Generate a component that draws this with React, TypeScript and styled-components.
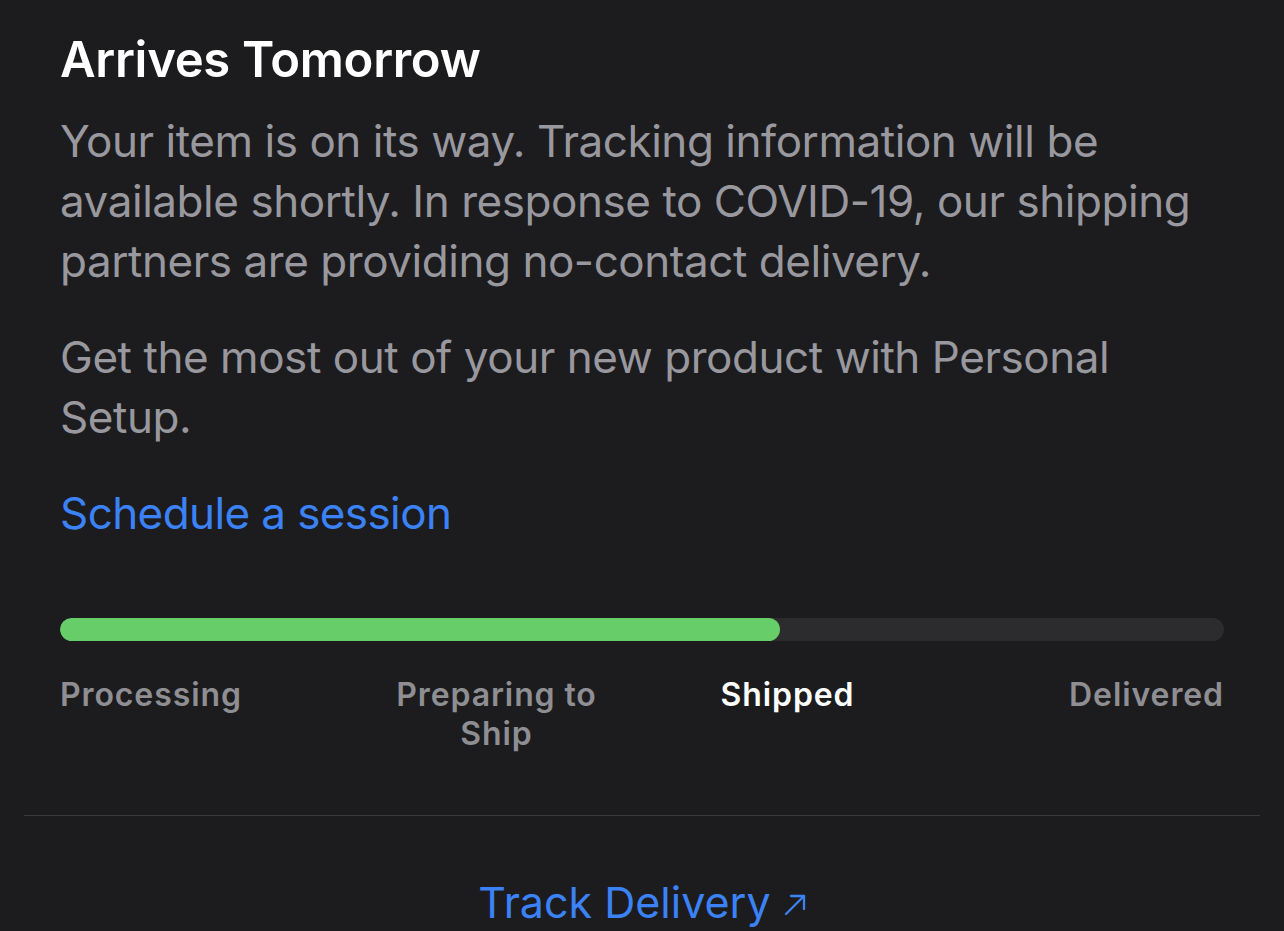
import styled, { createGlobalStyle } from 'styled-components';

const GlobalStyle = createGlobalStyle`
  html, body {
    margin: 0;
    padding: 0;
    background: #1c1c1e;
  }
  body {
    font-family: Inter, "Noto Sans", "Liberation Sans", sans-serif;
    -webkit-font-smoothing: antialiased;
  }
`;

const Page = styled.div`
  width: 1284px;
  height: 931px;
  overflow: hidden;
  background: #1c1c1e;
  padding: 0 24px;
  box-sizing: border-box;
`;

const Body = styled.section`
  padding: 30px 36px 0;
`;

const Title = styled.h1`
  margin: 0 0 21px;
  font-size: 49px;
  line-height: 60px;
  font-weight: 600;
  letter-spacing: -0.3px;
  color: #ffffff;
`;

const Text = styled.p`
  margin: 0 0 36px;
  font-size: 44px;
  line-height: 60px;
  font-weight: 400;
  letter-spacing: -0.45px;
  color: #98989e;
`;

const Link = styled.a`
  display: block;
  font-size: 44px;
  line-height: 60px;
  letter-spacing: -0.6px;
  color: #3b82f6;
  text-decoration: none;
`;

const Track = styled.div`
  margin-top: 75px;
  height: 23px;
  border-radius: 12px;
  background: #2c2c2e;
  overflow: hidden;
`;

const Fill = styled.div`
  height: 100%;
  border-radius: 12px;
  background: #66cd68;
`;

const Steps = styled.div`
  display: grid;
  grid-template-columns: repeat(4, 1fr);
  margin-top: 34px;
  padding-bottom: 62px;
`;

const Step = styled.div<{ $align: 'left' | 'center' | 'right'; $active?: boolean }>`
  text-align: ${(p) => p.$align};
  font-size: 32px;
  line-height: 39px;
  font-weight: 600;
  letter-spacing: 0.9px;
  color: ${(p) => (p.$active ? '#ffffff' : '#8e8e93')};
`;

const Divider = styled.hr`
  margin: 0;
  border: none;
  border-top: 1px solid #3a3a3c;
`;

const Footer = styled.div`
  display: flex;
  justify-content: center;
  padding-top: 56px;
`;

const TrackLink = styled.a`
  display: flex;
  align-items: center;
  gap: 13px;
  font-size: 43px;
  line-height: 60px;
  letter-spacing: 0;
  color: #3b82f6;
  text-decoration: none;
`;

const ArrowIcon = styled.svg`
  margin-top: 6px;
`;

const steps = [
  { label: 'Processing', align: 'left' as const },
  { label: 'Preparing to\nShip', align: 'center' as const },
  { label: 'Shipped', align: 'center' as const, active: true },
  { label: 'Delivered', align: 'right' as const },
];

export default function App() {
  const progress = (780 - 60) / (1224 - 60);

  return (
    <Page>
      <GlobalStyle />
      <Body>
        <Title>Arrives Tomorrow</Title>
        <Text>
          Your item is on its way. Tracking information will be available shortly. In response to
          COVID-19, our shipping partners are providing no-contact delivery.
        </Text>
        <Text>Get the most out of your new product with Personal Setup.</Text>
        <Link href="#">Schedule a session</Link>
        <Track>
          <Fill style={{ width: `${progress * 100}%` }} />
        </Track>
        <Steps>
          {steps.map((s) => (
            <Step key={s.label} $align={s.align} $active={s.active}>
              {s.label.split('\n').map((line) => (
                <div key={line}>{line}</div>
              ))}
            </Step>
          ))}
        </Steps>
      </Body>
      <Divider />
      <Footer>
        <TrackLink href="#">
          Track Delivery
          <ArrowIcon width="22" height="22" viewBox="0 0 22 22" fill="none" stroke="#3b82f6" strokeWidth="2.3" strokeLinecap="round" strokeLinejoin="round">
            <path d="M2 20 L20 2" />
            <path d="M7 2 H20 V15" />
          </ArrowIcon>
        </TrackLink>
      </Footer>
    </Page>
  );
}
